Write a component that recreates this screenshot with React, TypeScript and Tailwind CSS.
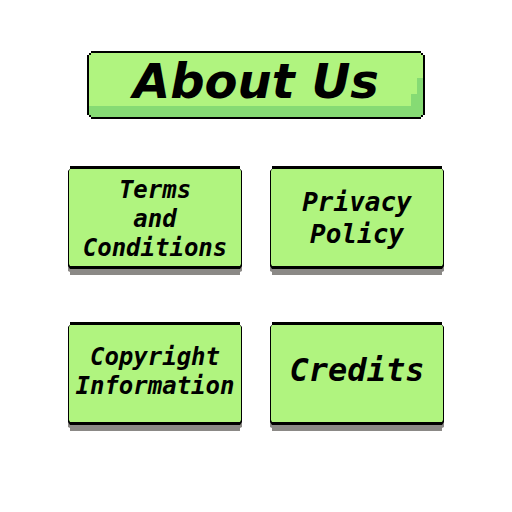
import React from "react";

type CardProps = { lines: string[]; textClass: string };

function PixelCard({ lines, textClass }: CardProps) {
  return (
    <button
      type="button"
      className="flex min-w-0 flex-col bg-[#8b8986] pb-[6px] [clip-path:polygon(2px_0,calc(100%-2px)_0,calc(100%-2px)_3px,100%_5px,100%_calc(100%-4px),calc(100%-2px)_calc(100%-3px),calc(100%-2px)_100%,2px_100%,2px_calc(100%-3px),0_calc(100%-4px),0_5px,2px_3px)]"
    >
      <span className="flex w-full flex-col bg-black px-px py-[3px] [clip-path:polygon(0_0,100%_0,100%_calc(100%-3px),calc(100%-2px)_100%,2px_100%,0_calc(100%-3px))]">
        <span
          className={
            "flex h-[97px] w-full flex-col items-center justify-center bg-[#b0f47f] text-center font-bold whitespace-nowrap text-black italic [clip-path:polygon(1px_0,calc(100%-1px)_0,100%_2px,100%_calc(100%-2px),calc(100%-1px)_100%,1px_100%,0_calc(100%-2px),0_2px)] " +
            textClass
          }
        >
          {lines.map((line) => (
            <span key={line} className="block">
              {line}
            </span>
          ))}
        </span>
      </span>
    </button>
  );
}

export default function App() {
  return (
    <main className="flex min-h-screen flex-col items-center bg-white px-[68px] pt-[51px] font-['DejaVu_Sans_Mono',monospace]">
      <header className="w-full max-w-[338px] bg-black p-[2px] [clip-path:polygon(4px_0,calc(100%-4px)_0,calc(100%-4px)_2px,calc(100%-2px)_2px,calc(100%-2px)_4px,100%_4px,100%_calc(100%-4px),calc(100%-2px)_calc(100%-4px),calc(100%-2px)_calc(100%-2px),calc(100%-4px)_calc(100%-2px),calc(100%-4px)_100%,4px_100%,4px_calc(100%-2px),2px_calc(100%-2px),2px_calc(100%-4px),0_calc(100%-4px),0_4px,2px_4px,2px_2px,4px_2px)]">
        <div className="relative bg-[#b0f47f] pb-[11px] [clip-path:polygon(2px_0,calc(100%-2px)_0,calc(100%-2px)_2px,100%_2px,100%_calc(100%-2px),calc(100%-2px)_calc(100%-2px),calc(100%-2px)_100%,2px_100%,2px_calc(100%-2px),0_calc(100%-2px),0_2px,2px_2px)]">
          <div className="absolute inset-0 bg-[#86db74] [clip-path:polygon(0_calc(100%-11px),calc(100%-12px)_calc(100%-11px),calc(100%-12px)_calc(100%-23px),calc(100%-6px)_calc(100%-23px),calc(100%-6px)_calc(100%-39px),100%_calc(100%-39px),100%_100%,0_100%)]" />
          <h1 className="relative pt-1 text-center font-['DejaVu_Sans',sans-serif] text-[48px] leading-[49px] font-bold whitespace-nowrap text-black italic">
            About Us
          </h1>
        </div>
      </header>
      <nav
        aria-label="About us pages"
        className="mt-[47px] grid w-full max-w-[376px] grid-cols-2 gap-x-[28px] gap-y-[47px]"
      >
        <PixelCard lines={["Terms", "and", "Conditions"]} textClass="pt-1 text-[24px] leading-[29px]" />
        <PixelCard lines={["Privacy", "Policy"]} textClass="text-[26px] leading-[32px]" />
        <PixelCard lines={["Copyright", "Information"]} textClass="pb-1 text-[24px] leading-[29px]" />
        <PixelCard lines={["Credits"]} textClass="pb-2 text-[32px] leading-[32px]" />
      </nav>
    </main>
  );
}
